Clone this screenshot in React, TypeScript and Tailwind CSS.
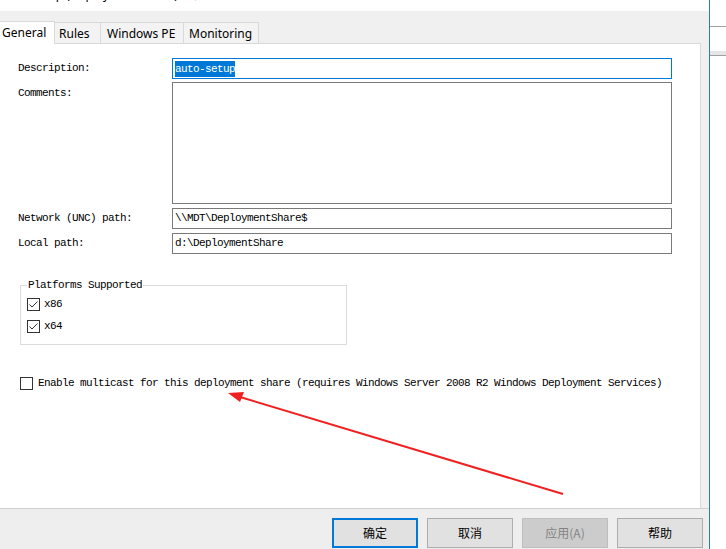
import React from 'react';

const mono = { fontFamily: '"Liberation Mono", "Noto Sans CJK SC", monospace' };

function CheckBox({ checked }: { checked?: boolean }) {
  return (
    <span className="w-[13px] h-[13px] border border-[#333333] bg-white flex items-center justify-center shrink-0">
      {checked && (
        <svg width="11" height="11" viewBox="0 0 11 11">
          <path d="M1.5 5.5 L4 8 L9.5 2.5" fill="none" stroke="#333333" strokeWidth="1" />
        </svg>
      )}
    </span>
  );
}

function Field({ label, children, h = 'h-[21px]', top }: { label: string; children?: React.ReactNode; h?: string; top?: boolean }) {
  return (
    <div className="flex">
      <div className={`w-[172px] pl-[18px] text-[11px] tracking-[-0.6px] text-black ${top ? 'pt-[3px]' : 'flex items-center'}`} style={mono}>
        {label}
      </div>
      <div className={`w-[500px] ${h} border border-[#7a7a7a] bg-white flex items-center pl-[2px] text-[11px] tracking-[-0.6px]`} style={mono}>
        {children}
      </div>
    </div>
  );
}

function Btn({ label, primary, disabled }: { label: string; primary?: boolean; disabled?: boolean }) {
  const cls = primary
    ? 'border-2 border-[#0078d7] bg-[#e1e1e1] text-black'
    : disabled
    ? 'border border-[#bfbfbf] bg-[#cccccc] text-[#838383]'
    : 'border border-[#adadad] bg-[#e1e1e1] text-black';
  return (
    <div className={`w-[86px] h-[30px] flex items-center justify-center text-[12px] ${cls}`} style={{ fontFamily: '"Noto Sans CJK SC", "Noto Sans", sans-serif' }}>
      {label}
    </div>
  );
}

export default function App() {
  return (
    <div className="relative w-[726px] h-[549px] overflow-hidden flex bg-white">
      <div className="w-[709px] flex flex-col bg-[#f0f0f0]">
        {/* title bar, cut off by the screenshot */}
        <div className="h-[11px] bg-white overflow-hidden">
          <div className="-mt-[13px] pl-[2px] text-[12px] leading-[16px] text-black" style={{ fontFamily: '"Noto Sans", "Noto Sans CJK SC", sans-serif' }}>
            auto-setup (Deployment Share) 属性
          </div>
        </div>

        {/* tabs */}
        <div className="h-[32px] flex items-end text-[12px] text-black" style={{ fontFamily: '"Noto Sans", sans-serif' }}>
          <div className="w-[55px] h-[23px] bg-white border-t border-r border-[#d9d9d9] pl-[2px] pt-[2px] -mb-px relative z-10">General</div>
          <div className="w-[46px] h-[21px] bg-[#f3f3f3] border-t border-r border-[#d9d9d9] pl-[4px] pt-[2px]">Rules</div>
          <div className="w-[83px] h-[21px] bg-[#f3f3f3] border-t border-r border-[#d9d9d9] pl-[6px] pt-[2px]">Windows PE</div>
          <div className="w-[75px] h-[21px] bg-[#f3f3f3] border-t border-r border-[#d9d9d9] pl-[5px] pt-[2px]">Monitoring</div>
        </div>

        {/* panel */}
        <div className="w-[701px] h-[465px] bg-white border-t border-r border-[#d9d9d9] pt-[14px] flex flex-col">
          <div className="flex">
            <div className="w-[172px] pl-[18px] text-[11px] tracking-[-0.6px] flex items-center" style={mono}>Description:</div>
            <div className="w-[500px] h-[21px] border border-[#0078d7] bg-white flex items-center pl-[2px] text-[11px] tracking-[-0.6px]" style={mono}>
              <span className="bg-[#0078d7] text-white leading-[16px]">auto-setup</span>
            </div>
          </div>
          <div className="mt-[3px]">
            <Field label="Comments:" h="h-[122px]" top />
          </div>
          <div className="mt-[4px]">
            <Field label="Network (UNC) path:">\\MDT\DeploymentShare$</Field>
          </div>
          <div className="mt-[4px]">
            <Field label="Local path:">d:\DeploymentShare</Field>
          </div>

          <div className="relative ml-[20px] mt-[31px] w-[327px] h-[60px] border border-[#dcdcdc] pt-[12px] pl-[6px] flex flex-col gap-[9px]">
            <span className="absolute -top-[8px] left-[6px] bg-white px-[1px] text-[11px] tracking-[-0.6px] leading-[14px]" style={mono}>Platforms Supported</span>
            <div className="flex items-center gap-[4px] text-[11px] tracking-[-0.6px] leading-[13px]" style={mono}>
              <CheckBox checked />
              <span>x86</span>
            </div>
            <div className="flex items-center gap-[4px] text-[11px] tracking-[-0.6px] leading-[13px]" style={mono}>
              <CheckBox checked />
              <span>x64</span>
            </div>
          </div>

          <div className="ml-[20px] mt-[32px] flex items-center gap-[5px] text-[11px] tracking-[-0.6px] leading-[13px]" style={mono}>
            <CheckBox />
            <span>Enable multicast for this deployment share (requires Windows Server 2008 R2 Windows Deployment Services)</span>
          </div>
        </div>

        {/* button bar */}
        <div className="flex-1 border-t border-[#cfcfcf] bg-[#eeeeee] flex pt-[9px] pl-[332px]">
          <Btn label="确定" primary />
          <div className="ml-[9px]"><Btn label="取消" /></div>
          <div className="ml-[9px]"><Btn label="应用(A)" disabled /></div>
          <div className="ml-[9px]"><Btn label="帮助" /></div>
        </div>
      </div>

      <div className="w-px bg-[#2b79c2]" />
      <div className="flex-1 bg-white flex flex-col">
        <div className="h-[26px]" />
        <div className="h-px bg-[#a0a0a0]" />
        <div className="h-[24px]" />
        <div className="h-[4px] bg-[#e6e6e6]" />
        <div className="h-px bg-[#a0a0a0]" />
      </div>

      <svg className="absolute inset-0 pointer-events-none" width="726" height="549">
        <line x1="563" y1="494" x2="240" y2="397" stroke="#f02020" strokeWidth="2" />
        <polygon points="228,393 244,392 240,402" fill="#f02020" />
      </svg>
    </div>
  );
}
